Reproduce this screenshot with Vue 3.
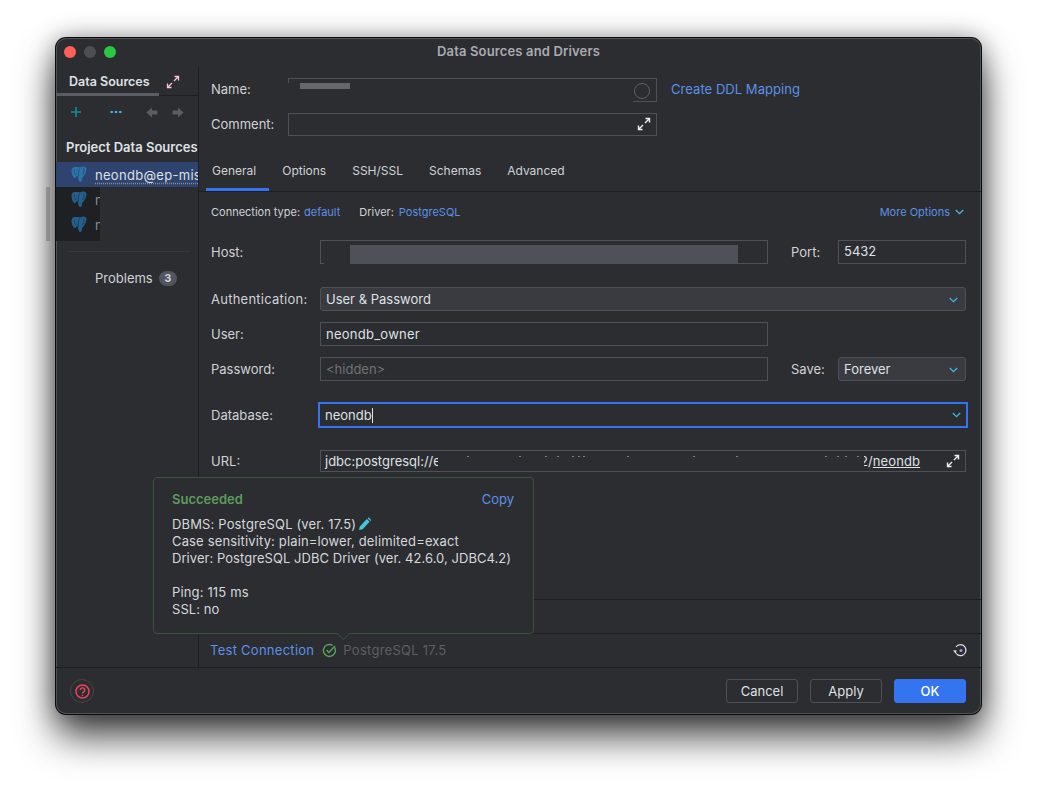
<script setup>
const ticks = [467, 519, 545, 557, 572, 578, 583, 627, 693, 736, 825, 837, 845, 857]
const tabs = ['General', 'Options', 'SSH/SSL', 'Schemas', 'Advanced']
const elephant = 'M4 1C1.500 1 .5 3 .5 5c0 3 1.500 6 3 7 1 .7 1.500-.5 2-2l1.500.5c0 2 .5 5 2 5.500 1.500.4 2-1.500 2-4 2-1.500 4-5 4.500-8 .3-2-1-3.500-3-3.500-1 0-2 .3-3 .8C8 1 6 1 4 1z'
const elephantLine = 'M9 2.200C7.500 4 6.800 7 7.500 10.500M12.500 2.500c.8 2 .5 4-.8 6.200M3.500 3.500c-.5 2 0 4 1.500 5.500'
</script>

<template>
  <div class="page">
    <div class="edge-mark"></div>
    <div class="window">
      <header class="titlebar">
        <div class="lights">
          <span class="light red"></span>
          <span class="light grey"></span>
          <span class="light green"></span>
        </div>
        <div class="title">Data Sources and Drivers</div>
      </header>

      <div class="body">
        <aside class="sidebar">
          <div class="side-tabs">
            <span class="side-tab">Data Sources</span>
            <svg class="side-expand" width="14" height="14" viewBox="0 0 14 14" fill="none" stroke="#f4c6d6" stroke-width="1.3">
              <path d="M8 6l4.500-4.500M8.500 1.500h4v4M6 8l-4.500 4.500M1.500 8.500v4h4" />
            </svg>
          </div>
          <div class="side-tools">
            <svg width="12" height="12" viewBox="0 0 12 12" stroke="#0f8b9c" stroke-width="1.6"><path d="M6 1v10M1 6h10" /></svg>
            <svg class="tool-dots" width="12" height="4" viewBox="0 0 12 4" fill="#3db8ea"><rect x="0.5" y="1" width="2.400" height="2" /><rect x="4.800" y="1" width="2.400" height="2" /><rect x="9.100" y="1" width="2.400" height="2" /></svg>
            <svg class="tool-left" width="12" height="11" viewBox="0 0 12 11" fill="#5b5d61"><path d="M6 .5v3h5.500v4H6v3L.5 5.500z" /></svg>
            <svg class="tool-right" width="12" height="11" viewBox="0 0 12 11" fill="#5b5d61"><path d="M6 .5v3H.5v4H6v3l5.500-5z" /></svg>
          </div>
          <div class="side-heading">Project Data Sources</div>
          <div class="ds-row selected">
            <svg class="pg" width="17" height="17" viewBox="0 0 17 17" fill="#2c74a8" stroke="none"><path :d="elephant" /><path :d="elephantLine" fill="none" stroke="#1d4e74" stroke-width=".9" /></svg>
            <span class="ds-name">neondb@ep-mist</span>
          </div>
          <div class="ds-dim">
            <div class="ds-row">
              <svg class="pg" width="17" height="17" viewBox="0 0 17 17" fill="#265f8c"><path :d="elephant" /><path :d="elephantLine" fill="none" stroke="#173c59" stroke-width=".9" /></svg>
              <span class="ds-cut">n</span>
            </div>
            <div class="ds-row">
              <svg class="pg" width="17" height="17" viewBox="0 0 17 17" fill="#265f8c"><path :d="elephant" /><path :d="elephantLine" fill="none" stroke="#173c59" stroke-width=".9" /></svg>
              <span class="ds-cut">n</span>
            </div>
          </div>
          <div class="side-rule"></div>
          <div class="problems">Problems <span class="badge">3</span></div>
        </aside>

        <main class="main">
          <section class="head">
            <div class="head-row">
              <label class="head-label">Name:</label>
              <div class="field name-field">
                <span class="name-patch"><i class="name-bar"></i></span>
                <span class="ring"></span>
              </div>
              <a class="link ddl">Create DDL Mapping</a>
            </div>
            <div class="head-row comment-row">
              <label class="head-label">Comment:</label>
              <div class="field comment-field">
                <svg class="expand" width="14" height="14" viewBox="0 0 14 14" fill="none" stroke="#eceef1" stroke-width="1.4"><path d="M8 6l4.500-4.500M8.500 1.500h4v4M6 8l-4.500 4.500M1.500 8.500v4h4" /></svg>
              </div>
            </div>
          </section>

          <nav class="tabs">
            <span v-for="(t, i) in tabs" :key="t" class="tab" :class="{ active: i === 0 }">{{ t }}</span>
          </nav>

          <section class="form">
            <div class="conn">
              <span>Connection type:</span><a class="link conn-val">default</a>
              <span class="conn-driver">Driver:</span><a class="link conn-val">PostgreSQL</a>
              <a class="link more">More Options
                <svg width="9" height="6" viewBox="0 0 9 6" fill="none" stroke="#3fc1d8" stroke-width="1.3"><path d="M.8 1l3.700 3.700L8.200 1" /></svg>
              </a>
            </div>

            <div class="row host-row">
              <label class="lab">Host:</label>
              <div class="field wide host-field">
                <span class="host-patch"></span>
                <span class="host-bar"></span>
              </div>
              <label class="lab2">Port:</label>
              <div class="field narrow port">5432</div>
            </div>

            <div class="row auth-row">
              <label class="lab auth-lab">Authentication:</label>
              <div class="combo full">User &amp; Password
                <svg class="chev" width="9" height="6" viewBox="0 0 9 6" fill="none" stroke="#3fb5e0" stroke-width="1.3"><path d="M.8 1l3.700 3.700L8.200 1" /></svg>
              </div>
            </div>

            <div class="row user-row">
              <label class="lab">User:</label>
              <div class="field wide user-val">neondb_owner</div>
            </div>

            <div class="row pass-row">
              <label class="lab">Password:</label>
              <div class="field wide placeholder">&lt;hidden&gt;</div>
              <label class="lab2">Save:</label>
              <div class="combo narrow">Forever
                <svg class="chev" width="9" height="6" viewBox="0 0 9 6" fill="none" stroke="#3fb5e0" stroke-width="1.3"><path d="M.8 1l3.700 3.700L8.200 1" /></svg>
              </div>
            </div>

            <div class="row db-row">
              <label class="lab">Database:</label>
              <div class="focus-field">
                <span>neondb</span><i class="caret"></i>
                <svg class="chev" width="9" height="6" viewBox="0 0 9 6" fill="none" stroke="#3fb5e0" stroke-width="1.3"><path d="M.8 1l3.700 3.700L8.200 1" /></svg>
              </div>
            </div>

            <div class="row url-row">
              <label class="lab">URL:</label>
              <div class="field full url-field">
                <span class="url-left">jdbc:postgresql://ep-misty</span>
                <span class="url-right">2/<u>neondb</u></span>
                <span class="url-patch"></span>
                <i v-for="t in ticks" :key="t" class="tick" :style="{ left: t - 321 + 'px' }"></i>
                <svg class="expand" width="14" height="14" viewBox="0 0 14 14" fill="none" stroke="#eceef1" stroke-width="1.4"><path d="M8 6l4.500-4.500M8.500 1.500h4v4M6 8l-4.500 4.500M1.500 8.500v4h4" /></svg>
              </div>
            </div>
          </section>

          <div class="test-spacer"></div>
          <div class="test-row">
            <a class="link test-link">Test Connection</a>
            <svg class="ok-ic" width="15" height="15" viewBox="0 0 15 15" fill="none" stroke="#57a35f" stroke-width="1.4"><path d="M12.600 4.500a6 6 0 1 1-2-2.100" /><path d="M4.500 7l2.300 2.400L13 3" /></svg>
            <span class="test-ver">PostgreSQL 17.5</span>
            <svg class="history" width="15" height="15" viewBox="0 0 15 15" fill="none" stroke="#dfe1e5" stroke-width="1.2"><path d="M3 4a5.500 5.500 0 1 1-1 3.500" /><path d="M0 7.500h4L2 9.800z" fill="#dfe1e5" stroke="none" /><circle cx="8" cy="7.500" r="1.500" fill="#b78be0" stroke="none" /></svg>
          </div>
        </main>
      </div>

      <footer class="footer">
        <span class="help">
          <svg width="15" height="15" viewBox="0 0 15 15" fill="none" stroke="#e8425f" stroke-width="1.5"><circle cx="7.500" cy="7.500" r="6.500" /><path d="M5.300 6a2.200 2.200 0 1 1 3.400 1.900c-.8.500-1.200.9-1.200 1.700" /><path d="M7.500 10.700v1.200" /></svg>
        </span>
        <div class="buttons">
          <button class="btn">Cancel</button>
          <button class="btn">Apply</button>
          <button class="btn primary">OK</button>
        </div>
      </footer>

      <div class="tooltip">
        <div class="tip-head">
          <span class="tip-ok">Succeeded</span>
          <a class="link">Copy</a>
        </div>
        <div class="tip-body">
          <div class="wider">DBMS: PostgreSQL (ver. 17.5)<svg class="pencil" width="14" height="14" viewBox="0 0 14 14" fill="#3fc9dc"><path d="M1 13l.8-3.600 7-7.400 2.800 2.800-7 7.400zM9.500 1.300l1-1 2.800 2.800-1 1z" /></svg></div>
          <div class="wider">Case sensitivity: plain=lower, delimited=exact</div>
          <div>Driver: PostgreSQL JDBC Driver (ver. 42.6.0, JDBC4.2)</div>
          <div class="gap wider">Ping: 115 ms</div>
          <div>SSL: no</div>
        </div>
        <i class="tip-arrow"></i>
      </div>
    </div>
  </div>
</template>

<style>
html, body { margin: 0; background: #fff; }
</style>

<style scoped>
.page {
  position: relative;
  width: 1037px;
  height: 788px;
  padding: 38px 0 0 56px;
  box-sizing: border-box;
  overflow: hidden;
  font-family: Inter, "Liberation Sans", sans-serif;
  font-size: 13px;
  color: #dfe1e5;
}
.edge-mark {
  position: absolute;
  left: 46px;
  top: 187px;
  width: 4px;
  height: 54px;
  background: #d2d2d2;
}
.window {
  position: relative;
  width: 925px;
  height: 676px;
  box-sizing: border-box;
  display: flex;
  flex-direction: column;
  background: #2b2d30;
  border-radius: 10px;
  box-shadow: 0 0 0 1px #0c0c0d, inset 0 0 0 1px #505257, 0 22px 38px rgba(0, 0, 0, .75), 0 0 24px rgba(0, 0, 0, .36);
}
.titlebar {
  flex: none;
  height: 29px;
  position: relative;
  display: flex;
  align-items: center;
  justify-content: center;
}
.lights {
  position: absolute;
  left: 8px;
  top: 8px;
  display: flex;
  gap: 8px;
}
.light { width: 12px; height: 12px; border-radius: 50%; }
.red { background: #fe5f57; }
.grey { background: #4c4e51; }
.green { background: #28c840; }
.title {
  font-size: 13px;
  font-weight: 600;
  letter-spacing: .15px;
  color: #a9abb0;
  padding-bottom: 3px;
}
.body {
  flex: 1;
  display: flex;
  min-height: 0;
}
.sidebar {
  flex: none;
  width: 142px;
  border-right: 1px solid #1e1f22;
  overflow: hidden;
}
.side-tabs {
  height: 29px;
  box-sizing: border-box;
  border-bottom: 1px solid #1e1f22;
  position: relative;
  display: flex;
  align-items: center;
  padding: 1px 0 0 13px;
}
.side-tab { font-size: 12.500px; font-weight: 600; color: #dfe1e5; }
.side-tabs::after {
  content: "";
  position: absolute;
  left: 0;
  bottom: -1px;
  width: 103px;
  height: 3px;
  background: #5a5d63;
}
.side-expand { margin-left: 16px; }
.side-tools {
  height: 32px;
  display: flex;
  align-items: center;
  padding-left: 14px;
}
.tool-dots { margin-left: 28px; }
.tool-left { margin-left: 24px; }
.tool-right { margin-left: 14px; }
.side-heading {
  font-weight: 600;
  font-size: 13px;
  height: 34px;
  line-height: 38px;
  padding-left: 10px;
  white-space: nowrap;
  color: #dfe1e5;
}
.ds-row {
  height: 25px;
  display: flex;
  align-items: center;
  padding-left: 15px;
  white-space: nowrap;
  overflow: hidden;
}
.ds-row.selected { background: #2e436e; }
.pg { flex: none; }
.ds-name {
  margin-left: 7px;
  color: #dfe1e5;
  letter-spacing: .3px;
  text-decoration: underline dotted #8b8d92;
  text-underline-offset: 3px;
}
.ds-dim {
  width: 44px;
  height: 54px;
  background: #1f2023;
  overflow: hidden;
  box-sizing: border-box;
}
.ds-dim .ds-row { height: 25px; padding-left: 15px; }
.ds-cut { margin-left: 7px; color: #8a8c90; }
.side-rule {
  height: 1px;
  margin: 10px 8px 0 11px;
  background: #36383c;
}
.problems {
  margin-top: 18px;
  padding-left: 39px;
  display: flex;
  align-items: center;
  gap: 6px;
  color: #d0d2d6;
  height: 16px;
}
.badge {
  min-width: 18px;
  height: 15px;
  line-height: 15px;
  border-radius: 8px;
  background: #515560;
  font-size: 11px;
  font-weight: 700;
  text-align: center;
}
.main {
  flex: 1;
  min-width: 0;
  display: flex;
  flex-direction: column;
}
.head { padding: 11px 0 0 12px; }
.head-row { display: flex; align-items: center; height: 24px; }
.comment-row { margin-top: 11px; height: 23px; }
.head-label { width: 77px; color: #d0d2d6; padding-bottom: 2px; }
.field {
  position: relative;
  box-sizing: border-box;
  height: 24px;
  border: 1px solid #4e5157;
  line-height: 22px;
  padding-left: 5px;
  color: #dfe1e5;
}
.name-field, .comment-field { width: 369px; }
.comment-field { height: 23px; }
.name-patch {
  position: absolute;
  left: -1px;
  top: 4px;
  width: 345px;
  height: 20px;
  background: #2b2d30;
}
.name-bar {
  position: absolute;
  left: 12px;
  top: 0;
  width: 50px;
  height: 6px;
  background: #65686b;
}
.ring {
  position: absolute;
  right: 6px;
  top: 4px;
  width: 14px;
  height: 14px;
  border: 1px solid #5d6064;
  border-radius: 50%;
}
.expand { position: absolute; right: 5px; top: 3px; }
.link { color: #5d90e8; }
.ddl { margin-left: 14px; padding-bottom: 2px; letter-spacing: .05px; }
.tabs {
  flex: none;
  height: 34px;
  margin-top: 21px;
  display: flex;
  padding-left: 7px;
  border-bottom: 1px solid #1e1f22;
  font-size: 12px;
}
.tab {
  padding: 0 13px 8px;
  display: flex;
  align-items: center;
  color: #d0d2d6;
}
.tab.active {
  padding-left: 6px;
  box-shadow: inset 0 -3px 0 #3574f0;
}
.form { padding: 0 15px 0 12px; font-size: 13px; }
.conn {
  display: flex;
  align-items: center;
  height: 42px;
  box-sizing: border-box;
  padding-bottom: 2px;
  font-size: 11px;
  color: #d0d2d6;
}
.conn-val { margin-left: 4px; }
.conn-driver { margin-left: 19px; margin-right: 1px; }
.more { margin-left: auto; padding-right: 2px; display: flex; align-items: center; gap: 5px; }
.row { display: flex; align-items: center; }
.host-row { margin-top: 6px; }
.auth-row { margin-top: 23px; }
.user-row { margin-top: 11px; }
.pass-row { margin-top: 11px; }
.db-row { margin-top: 21px; height: 26px; }
.url-row { margin-top: 22px; }
.lab { flex: none; width: 109px; color: #d0d2d6; }
.auth-lab { letter-spacing: .25px; }
.lab2 { flex: none; width: 47px; margin-left: 23px; color: #d0d2d6; }
.wide { width: 448px; }
.narrow { width: 128px; }
.full { flex: 1; }
.port { line-height: 20px; }
.user-val { letter-spacing: .25px; }
.placeholder { color: #6f7277; }
.host-patch {
  position: absolute;
  left: 3px;
  top: 4px;
  bottom: -1px;
  width: 27px;
  background: #2b2d30;
}
.host-bar {
  position: absolute;
  left: 29px;
  top: 4px;
  bottom: -1px;
  width: 388px;
  background: #4e5157;
}
.combo {
  position: relative;
  box-sizing: border-box;
  height: 24px;
  line-height: 22px;
  padding-left: 5px;
  border: 1px solid #4e5157;
  border-radius: 3px;
  background: #393b40;
}
.chev { position: absolute; right: 7px; top: 9px; }
.focus-field {
  position: relative;
  flex: none;
  box-sizing: border-box;
  width: 650px;
  height: 26px;
  margin-left: -2px;
  padding-left: 5px;
  line-height: 22px;
  border: 2px solid #3574f0;
  display: flex;
  align-items: center;
}
.focus-field .chev { top: 8px; right: 5px; }
.caret { width: 1px; height: 15px; background: #dfe1e5; }
.url-field { height: 22px; line-height: 20px; padding-left: 4px; white-space: nowrap; overflow: hidden; }
.url-left { display: inline-block; }
.url-patch {
  position: absolute;
  left: 117px;
  top: 1px;
  bottom: -1px;
  width: 426px;
  background: #2b2d30;
}
.tick {
  position: absolute;
  top: 5px;
  width: 2px;
  height: 1px;
  background: #7d7f83;
}
.url-right { position: absolute; left: 539px; top: 0; letter-spacing: .1px; }
.url-field .expand { top: 3px; }
.test-spacer {
  flex: 1;
  border-bottom: 1px solid #1e1f22;
}
.test-row {
  flex: none;
  height: 67px;
  box-sizing: border-box;
  padding-top: 33px;
  display: flex;
  align-items: center;
  padding-left: 11px;
  padding-right: 13px;
  background: linear-gradient(#1e1f22, #1e1f22) 0 33px / 100% 1px no-repeat;
}
.test-link { letter-spacing: .27px; }
.ok-ic { margin-left: 8px; }
.test-ver { margin-left: 6px; color: #5c5f64; letter-spacing: .27px; }
.history { margin-left: auto; }
.footer {
  flex: none;
  height: 47px;
  box-sizing: border-box;
  border-top: 1px solid #1e1f22;
  display: flex;
  align-items: center;
  justify-content: space-between;
  padding: 0 15px 0 14px;
}
.help {
  width: 22px;
  height: 22px;
  border: 1px solid #44464b;
  border-radius: 50%;
  display: flex;
  align-items: center;
  justify-content: center;
}
.buttons { display: flex; gap: 12px; }
.btn {
  width: 72px;
  height: 24px;
  padding: 0;
  background: #2b2d30;
  border: 1px solid #4e5157;
  border-radius: 3px;
  color: #dfe1e5;
  font: inherit;
}
.btn.primary { background: #3574f0; border-color: #3574f0; color: #fff; font-weight: 500; }
.tooltip {
  position: absolute;
  left: 97px;
  top: 439px;
  width: 381px;
  height: 157px;
  box-sizing: border-box;
  background: #2b2d30;
  border: 1px solid #3a5240;
  border-radius: 4px;
  padding: 9px 19px 0 18px;
}
.tip-head { display: flex; justify-content: space-between; height: 23px; align-items: center; }
.tip-ok { color: #5f9a5f; font-weight: 600; font-size: 13px; }
.tip-body { margin-top: 6px; line-height: 17px; color: #d6d8dc; font-size: 13px; letter-spacing: .05px; }
.wider { letter-spacing: .15px; }
.gap { margin-top: 17px; }
.pencil { vertical-align: -2px; margin-left: 2px; }
.tip-arrow {
  position: absolute;
  left: 183px;
  bottom: -7px;
  width: 12px;
  height: 12px;
  background: #2b2d30;
  border-right: 1px solid #3a5240;
  border-bottom: 1px solid #3a5240;
  transform: rotate(45deg) scale(.72);
}
</style>
